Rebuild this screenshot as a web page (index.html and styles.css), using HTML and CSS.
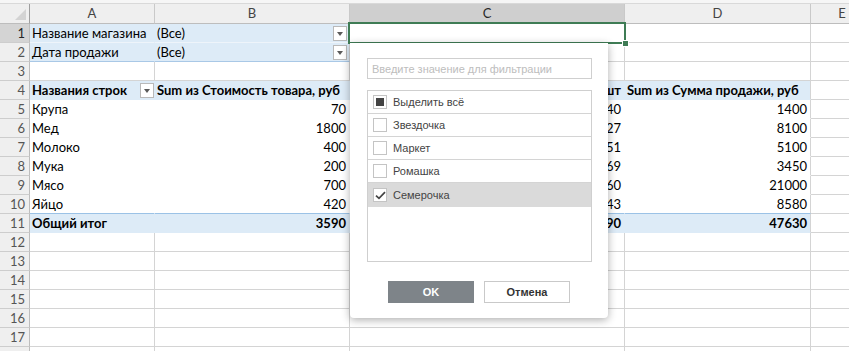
FILE: index.html
```html
<!DOCTYPE html>
<html lang="ru">
<head>
<meta charset="utf-8">
<title>Сводная таблица</title>
<link rel="stylesheet" href="styles.css">
</head>
<body>
<div class="sheet">
  <div class="strip"></div>

  <div class="hd corner"><span class="tri"></span></div>
  <div class="hd">A</div>
  <div class="hd">B</div>
  <div class="hd sel">C</div>
  <div class="hd">D</div>
  <div class="hd">E</div>

  <div class="rn sel">1</div>
  <div class="c bl nr r1">Название магазина</div>
  <div class="c bl r1 dd"><span>(Все)</span><span class="btn"></span></div>
  <div class="c"></div>
  <div class="c"></div>
  <div class="c"></div>

  <div class="rn">2</div>
  <div class="c bl nr r2">Дата продажи</div>
  <div class="c bl r2 dd"><span>(Все)</span><span class="btn"></span></div>
  <div class="c"></div>
  <div class="c"></div>
  <div class="c"></div>

  <div class="rn">3</div>
  <div class="c"></div>
  <div class="c"></div>
  <div class="c"></div>
  <div class="c"></div>
  <div class="c"></div>

  <div class="rn">4</div>
  <div class="c bl b ng dd dd4"><span>Названия строк</span><span class="btn"></span></div>
  <div class="c bl b ng">Sum из Стоимость товара, руб</div>
  <div class="c bl b ng r">Sum из Количество товара, шт</div>
  <div class="c bl b ng lastcol">Sum из Сумма продажи, руб</div>
  <div class="c"></div>

  <div class="rn">5</div>
  <div class="c ng">Крупа</div>
  <div class="c ng r">70</div>
  <div class="c ng r">40</div>
  <div class="c ng r lastcol">1400</div>
  <div class="c"></div>

  <div class="rn">6</div>
  <div class="c ng">Мед</div>
  <div class="c ng r">1800</div>
  <div class="c ng r">27</div>
  <div class="c ng r lastcol">8100</div>
  <div class="c"></div>

  <div class="rn">7</div>
  <div class="c ng">Молоко</div>
  <div class="c ng r">400</div>
  <div class="c ng r">51</div>
  <div class="c ng r lastcol">5100</div>
  <div class="c"></div>

  <div class="rn">8</div>
  <div class="c ng">Мука</div>
  <div class="c ng r">200</div>
  <div class="c ng r">69</div>
  <div class="c ng r lastcol">3450</div>
  <div class="c"></div>

  <div class="rn">9</div>
  <div class="c ng">Мясо</div>
  <div class="c ng r">700</div>
  <div class="c ng r">60</div>
  <div class="c ng r lastcol">21000</div>
  <div class="c"></div>

  <div class="rn">10</div>
  <div class="c ng pre">Яйцо</div>
  <div class="c ng r pre">420</div>
  <div class="c ng r pre">43</div>
  <div class="c ng r pre lastcol">8580</div>
  <div class="c"></div>

  <div class="rn">11</div>
  <div class="c bl b ng tot">Общий итог</div>
  <div class="c bl b ng r tot">3590</div>
  <div class="c bl b ng r tot">290</div>
  <div class="c bl b ng r tot lastcol">47630</div>
  <div class="c"></div>

  <div class="rn">12</div><div class="c"></div><div class="c"></div><div class="c"></div><div class="c"></div><div class="c"></div>
  <div class="rn">13</div><div class="c"></div><div class="c"></div><div class="c"></div><div class="c"></div><div class="c"></div>
  <div class="rn">14</div><div class="c"></div><div class="c"></div><div class="c"></div><div class="c"></div><div class="c"></div>
  <div class="rn">15</div><div class="c"></div><div class="c"></div><div class="c"></div><div class="c"></div><div class="c"></div>
  <div class="rn">16</div><div class="c"></div><div class="c"></div><div class="c"></div><div class="c"></div><div class="c"></div>
  <div class="rn">17</div><div class="c"></div><div class="c"></div><div class="c"></div><div class="c"></div><div class="c"></div>
  <div class="rn"></div><div class="c"></div><div class="c"></div><div class="c"></div><div class="c"></div><div class="c"></div>

  <div class="selbox"><span class="handle"></span></div>

  <div class="popup">
    <input class="search" type="text" placeholder="Введите значение для фильтрации">
    <ul class="list">
      <li class="item"><span class="cb part"></span>Выделить всё</li>
      <li class="item"><span class="cb"></span>Звездочка</li>
      <li class="item"><span class="cb"></span>Маркет</li>
      <li class="item"><span class="cb"></span>Ромашка</li>
      <li class="item on"><span class="cb"><svg width="11" height="9" viewBox="0 0 11 9"><path d="M1 4.6 L4 7.4 L10 1.2" fill="none" stroke="#444" stroke-width="1.7"/></svg></span>Семерочка</li>
    </ul>
    <div class="btns">
      <button class="ok">OK</button>
      <button class="cancel">Отмена</button>
    </div>
  </div>
</div>
</body>
</html>
```
FILE: styles.css
```css
* { box-sizing: border-box; }
html, body { margin: 0; padding: 0; }
body {
  width: 849px;
  height: 351px;
  overflow: hidden;
  background: #fff;
  font-family: Lato, "Liberation Sans", sans-serif;
}
.sheet {
  position: relative;
  display: grid;
  grid-template-columns: 30px 125px 195px 275px 186px 63px;
  grid-template-rows: 4px 20px repeat(18, 19px);
  font-size: 13px;
  color: #000;
}
.strip {
  grid-column: 1 / -1;
  background: #f6f6f6;
  border-bottom: 1px solid #d9d9d9;
}
.hd {
  background: #efefef;
  border-right: 1px solid #c9c9c9;
  border-bottom: 1px solid #bdbdbd;
  color: #444;
  text-align: center;
  line-height: 19px;
  font-size: 13px;
}
.hd.sel { background: #cfcfcf; color: #262626; }
.corner {
  position: relative;
  border-right: 1px solid #9e9e9e;
}
.tri {
  position: absolute;
  right: 3px;
  bottom: 3px;
  width: 0;
  height: 0;
  border-left: 11px solid transparent;
  border-bottom: 11px solid #d3d3d3;
}
.rn {
  background: #efefef;
  border-right: 1px solid #bdbdbd;
  border-bottom: 1px solid #cdcdcd;
  color: #555;
  text-align: right;
  padding-right: 4px;
  line-height: 18px;
  font-size: 13px;
}
.rn.sel { background: #d4d4d4; color: #262626; }
.c {
  border-right: 1px solid #d4d4d4;
  border-bottom: 1px solid #d4d4d4;
  padding: 0 2px 0 2px;
  line-height: 18px;
  white-space: nowrap;
  overflow: visible;
}
.bl { background: #ddebf7; }
.b { font-weight: 700; }
.r { text-align: right; padding-right: 3px; }
.nr { border-right-color: transparent; }
.r1 { border-bottom-color: #eef4fa; }
.r2 { border-bottom-color: #a9c8e6; }
.ng { border-right-color: transparent; border-bottom-color: transparent; }
.ng.bl { border-bottom-color: #ddebf7; border-right-color: #ddebf7; }
.lastcol, .ng.bl.lastcol { border-right-color: #d4d4d4; }
.pre { border-bottom-color: #9bc2e6; }
.dd {
  display: flex;
  align-items: center;
  justify-content: space-between;
}
.dd4 { padding-right: 0; }
.btn {
  position: relative;
  width: 14px;
  height: 15px;
  background: #fff;
  border: 1px solid #b9b9b9;
  flex: none;
}
.btn::after {
  content: "";
  position: absolute;
  left: 3px;
  top: 5px;
  border-left: 3.5px solid transparent;
  border-right: 3.5px solid transparent;
  border-top: 4px solid #5a5a5a;
}
.selbox {
  position: absolute;
  left: 348px;
  top: 22px;
  width: 278px;
  height: 22px;
  border: 2px solid #3f7c55;
  pointer-events: none;
}
.handle {
  position: absolute;
  right: -5px;
  bottom: -5px;
  width: 7px;
  height: 7px;
  background: #3f7c55;
  border: 1px solid #fff;
}
.popup {
  position: absolute;
  left: 350px;
  top: 43px;
  width: 258px;
  height: 275px;
  background: #fff;
  border-radius: 0 0 4px 4px;
  box-shadow: 0 2px 9px rgba(0, 0, 0, 0.32);
  padding: 15px 16px 0 17px;
  font-family: "Liberation Sans", Arial, sans-serif;
  font-size: 11px;
  color: #444;
}
.search {
  display: block;
  width: 225px;
  height: 21px;
  margin: 0;
  border: 1px solid #cfcfcf;
  padding: 0 4px;
  font-family: "Liberation Sans", Arial, sans-serif;
  font-size: 11px;
  outline: none;
}
.search::placeholder { color: #bdbdbd; }
.list {
  list-style: none;
  margin: 11px 0 0 0;
  padding: 0;
  width: 225px;
  height: 172px;
  border: 1px solid #cfcfcf;
}
.item {
  display: flex;
  align-items: center;
  gap: 6px;
  height: 23px;
  padding-left: 5px;
  border-bottom: 1px solid #d4d4d4;
  color: #444;
}
.item.on { background: #dadada; border-bottom: none; height: 24px; }
.cb {
  width: 14px;
  height: 14px;
  border: 1px solid #c4c4c4;
  background: #fff;
  display: flex;
  align-items: center;
  justify-content: center;
  flex: none;
}
.cb.part::after {
  content: "";
  width: 8px;
  height: 8px;
  background: #444;
}
.btns {
  display: flex;
  justify-content: center;
  gap: 10px;
  margin-top: 19px;
  padding-right: 1px;
}
.btns button {
  width: 86px;
  height: 22px;
  font-family: "Liberation Sans", Arial, sans-serif;
  font-size: 11px;
  font-weight: 700;
  padding: 0;
  margin: 0;
  cursor: pointer;
}
.ok { background: #7e8489; color: #fff; border: none; }
.cancel { background: #fff; color: #333; border: 1px solid #c9c9c9; }
```
